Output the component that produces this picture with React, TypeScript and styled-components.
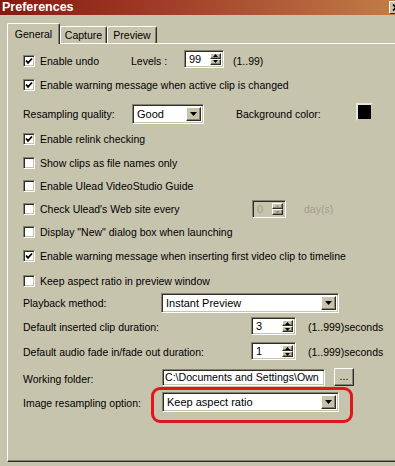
import React from 'react';
import styled, { createGlobalStyle } from 'styled-components';

const FACE = '#c7c4ae';
const LIGHT = '#ffffff';
const SHADOW = '#85836f';
const DARK = '#2e2e28';

const GlobalStyle = createGlobalStyle`
  html, body { margin: 0; padding: 0; background: ${FACE}; }
  body {
    font-family: "Liberation Sans", Arial, sans-serif;
    font-size: 10.5px;
    color: #000;
  }
  * { box-sizing: border-box; }
`;

const Arrow = ({ color = '#000' }: { color?: string }) => (
  <svg width="7" height="4" viewBox="0 0 7 4">
    <path d="M0 0h7L3.5 4z" fill={color} />
  </svg>
);

const SmallArrow = ({ up, color = '#000' }: { up?: boolean; color?: string }) => (
  <svg width="5" height="3" viewBox="0 0 5 3">
    <path d={up ? 'M0 3h5L2.5 0z' : 'M0 0h5L2.5 3z'} fill={color} />
  </svg>
);

const Tick = () => (
  <svg width="8" height="8" viewBox="0 0 8 8">
    <polyline points="1,3.5 3,5.8 7,1.5" fill="none" stroke="#000" strokeWidth="1.8" />
  </svg>
);

const Cross = () => (
  <svg width="8" height="7" viewBox="0 0 8 7">
    <path d="M1 0.5l6 6M7 0.5l-6 6" stroke="#000" strokeWidth="1.6" />
  </svg>
);

const CheckBox = ({ checked }: { checked?: boolean }) => (
  <Box>{checked && <Tick />}</Box>
);

const Dropdown = ({ width, value }: { width: number; value: string }) => (
  <Field $w={width} $h={20}>
    <FieldText>{value}</FieldText>
    <DropButton>
      <Arrow />
    </DropButton>
  </Field>
);

const SpinBox = ({
  width,
  value,
  disabled,
  lift,
}: {
  width: number;
  value: string;
  disabled?: boolean;
  lift?: number;
}) => (
  <Field $w={width} $h={18} $disabled={disabled} $lift={lift}>
    <FieldText $disabled={disabled}>{value}</FieldText>
    <SpinButtons>
      <SpinButton>
        <SmallArrow up color={disabled ? '#8f8c78' : '#000'} />
      </SpinButton>
      <SpinButton>
        <SmallArrow color={disabled ? '#8f8c78' : '#000'} />
      </SpinButton>
    </SpinButtons>
  </Field>
);

const App = () => {
  return (
    <>
      <GlobalStyle />
      <Window>
        <TitleBar>
          <Title>Preferences</Title>
          <CloseButton>
            <Cross />
          </CloseButton>
        </TitleBar>
        <Body>
          <TabStrip>
            <Tab $active $w={53}>General</Tab>
            <Tab $w={47}>Capture</Tab>
            <Tab $w={50}>Preview</Tab>
          </TabStrip>
          <Panel>
            <Row $gap={0}>
              <CheckBox checked />
              <Label $w={91}>Enable undo</Label>
              <Label $w={53}>Levels :</Label>
              <SpinBox width={40} value="99" lift={5} />
              <Label $ml={9}>(1..99)</Label>
            </Row>
            <Row $gap={4}>
              <CheckBox checked />
              <Label>Enable warning message when active clip is changed</Label>
            </Row>
            <Row $gap={9}>
              <Label $w={109}>Resampling quality:</Label>
              <Dropdown width={72} value="Good" />
              <Label $ml={32} $w={120}>Background color:</Label>
              <Swatch />
            </Row>
            <Row $gap={5}>
              <CheckBox checked />
              <Label>Enable relink checking</Label>
            </Row>
            <Row $gap={4}>
              <CheckBox />
              <Label>Show clips as file names only</Label>
            </Row>
            <Row $gap={3}>
              <CheckBox />
              <Label>Enable Ulead VideoStudio Guide</Label>
            </Row>
            <Row $gap={3}>
              <CheckBox />
              <Label $w={212}>Check Ulead's Web site every</Label>
              <SpinBox width={34} value="0" disabled />
              <Label $ml={18} $disabled>day(s)</Label>
            </Row>
            <Row $gap={3}>
              <CheckBox />
              <Label>Display "New" dialog box when launching</Label>
            </Row>
            <Row $gap={4}>
              <CheckBox checked />
              <Label>Enable warning message when inserting first video clip to timeline</Label>
            </Row>
            <Row $gap={5}>
              <CheckBox />
              <Label>Keep aspect ratio in preview window</Label>
            </Row>
            <Row $gap={2}>
              <Label $w={138}>Playback method:</Label>
              <Dropdown width={178} value="Instant Preview" />
            </Row>
            <Row $gap={4}>
              <Label $w={228}>Default inserted clip duration:</Label>
              <SpinBox width={45} value="3" lift={2} />
              <Label $ml={12}>(1..999)seconds</Label>
            </Row>
            <Row $gap={5}>
              <Label $w={228}>Default audio fade in/fade out duration:</Label>
              <SpinBox width={45} value="1" lift={2} />
              <Label $ml={12}>(1..999)seconds</Label>
            </Row>
            <Row $gap={7}>
              <Label $w={139}>Working folder:</Label>
              <Field $w={163} $h={17} $lift={4}>
                <FieldText $pad={0} $size={10.6}>C:\Documents and Settings\Own</FieldText>
              </Field>
              <DotsButton $lift={4}>...</DotsButton>
            </Row>
            <Row $gap={4}>
              <Label $w={139}>Image resampling option:</Label>
              <Marked>
                <Dropdown width={177} value="Keep aspect ratio" />
                <RedRing />
              </Marked>
            </Row>
          </Panel>
        </Body>
      </Window>
    </>
  );
};

export default App;

// Styled Components
const Window = styled.div`
  width: 395px;
  height: 466px;
  display: flex;
  flex-direction: column;
  overflow: hidden;
  background: ${FACE};
`;

const TitleBar = styled.div`
  height: 15px;
  flex-shrink: 0;
  display: flex;
  align-items: center;
  justify-content: space-between;
  padding-left: 2px;
  background: linear-gradient(to right, #86180f 0%, #a3402a 45%, #c27c47 100%);
`;

const Title = styled.div`
  color: #fff;
  font-weight: bold;
  font-size: 12.5px;
  line-height: 15px;
`;

const CloseButton = styled.div`
  width: 16px;
  height: 13px;
  margin-right: -10px;
  background: ${FACE};
  border: 1px solid;
  border-color: ${LIGHT} ${DARK} ${DARK} ${LIGHT};
  display: flex;
  align-items: center;
  padding-left: 2px;
`;

const Body = styled.div`
  flex: 1;
  display: flex;
  flex-direction: column;
  padding: 8px 0 4px 7px;
`;

const TabStrip = styled.div`
  height: 20px;
  display: flex;
  align-items: flex-end;
  position: relative;
  z-index: 1;
`;

const Tab = styled.div<{ $active?: boolean; $w: number }>`
  width: ${(p) => p.$w}px;
  height: ${(p) => (p.$active ? 21 : 17)}px;
  margin-bottom: ${(p) => (p.$active ? -1 : 0)}px;
  background: ${FACE};
  border-top: 1px solid ${LIGHT};
  border-left: 1px solid ${LIGHT};
  border-right: 1px solid ${DARK};
  box-shadow: inset -1px 0 ${SHADOW};
  border-radius: 2px 2px 0 0;
  display: flex;
  align-items: center;
  justify-content: center;
  font-size: 10.5px;
`;

const Panel = styled.div`
  flex: 1;
  display: flex;
  flex-direction: column;
  border-top: 1px solid ${LIGHT};
  border-left: 1px solid ${LIGHT};
  border-bottom: 1px solid ${DARK};
  box-shadow: inset 0 -1px ${SHADOW};
  padding: 7px 0 0 15px;
`;

const Row = styled.div<{ $gap: number }>`
  height: 20px;
  flex-shrink: 0;
  margin-top: ${(p) => p.$gap}px;
  display: flex;
  align-items: center;
  white-space: nowrap;
`;

const Box = styled.div`
  width: 12px;
  height: 12px;
  flex-shrink: 0;
  margin-right: 5px;
  background: #fff;
  border: 1px solid;
  border-color: ${SHADOW} ${LIGHT} ${LIGHT} ${SHADOW};
  box-shadow: inset 1px 1px ${DARK}, inset -1px -1px ${FACE};
  display: flex;
  align-items: center;
  justify-content: center;
`;

const Label = styled.span<{ $w?: number; $ml?: number; $disabled?: boolean }>`
  flex-shrink: 0;
  width: ${(p) => (p.$w ? `${p.$w}px` : 'auto')};
  margin-left: ${(p) => p.$ml || 0}px;
  color: ${(p) => (p.$disabled ? '#a09d88' : '#000')};
  line-height: 14px;
`;

const Field = styled.div<{ $w: number; $h: number; $disabled?: boolean; $lift?: number }>`
  width: ${(p) => p.$w}px;
  height: ${(p) => p.$h}px;
  flex-shrink: 0;
  margin-bottom: ${(p) => p.$lift || 0}px;
  display: flex;
  align-items: stretch;
  background: ${(p) => (p.$disabled ? FACE : '#fff')};
  border: 1px solid;
  border-color: ${SHADOW} ${LIGHT} ${LIGHT} ${SHADOW};
  box-shadow: inset 1px 1px ${DARK}, inset -1px -1px ${FACE};
  padding: 2px;
  overflow: hidden;
`;

const FieldText = styled.div<{ $disabled?: boolean; $pad?: number; $size?: number }>`
  flex: 1;
  display: flex;
  align-items: center;
  padding-left: ${(p) => p.$pad ?? 2}px;
  color: ${(p) => (p.$disabled ? '#a09d88' : '#000')};
  font-size: ${(p) => p.$size ?? 11}px;
  white-space: nowrap;
  overflow: hidden;
`;

const raised = `
  background: ${FACE};
  border: 1px solid;
  border-color: ${LIGHT} ${DARK} ${DARK} ${LIGHT};
  box-shadow: inset -1px -1px ${SHADOW};
`;

const DropButton = styled.div`
  width: 15px;
  flex-shrink: 0;
  ${raised}
  display: flex;
  align-items: center;
  justify-content: center;
`;

const SpinButtons = styled.div`
  width: 11px;
  flex-shrink: 0;
  display: flex;
  flex-direction: column;
`;

const SpinButton = styled.div`
  flex: 1;
  ${raised}
  display: flex;
  align-items: center;
  justify-content: center;
`;

const Swatch = styled.div`
  width: 17px;
  height: 18px;
  margin-bottom: 4px;
  background: #000;
  border: 2px solid;
  border-color: #e9e7dc ${FACE} ${FACE} #e9e7dc;
`;

const DotsButton = styled.div<{ $lift?: number }>`
  width: 20px;
  height: 18px;
  margin-left: 9px;
  margin-bottom: ${(p) => p.$lift || 0}px;
  ${raised}
  display: flex;
  align-items: center;
  justify-content: center;
  padding-bottom: 3px;
`;

const Marked = styled.div`
  position: relative;
  margin-bottom: 3px;
`;

const RedRing = styled.div`
  position: absolute;
  left: -11px;
  top: -5px;
  right: -14px;
  bottom: -11px;
  border: 3px solid #e3141c;
  border-radius: 9px;
  pointer-events: none;
`;
